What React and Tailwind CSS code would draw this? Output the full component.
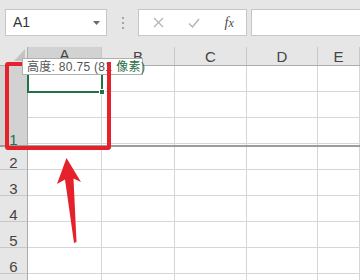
import React from "react";

const cols = [
  { key: "A", w: "w-[74px]", sel: true },
  { key: "B", w: "w-[73px]" },
  { key: "C", w: "w-[72px]" },
  { key: "D", w: "w-[71px]" },
  { key: "E", w: "flex-1" },
];

const rowHeads = [
  { n: 1, h: "h-[81px]", sel: true },
  { n: 2, h: "h-[23px]" },
  { n: 3, h: "h-[26px]" },
  { n: 4, h: "h-[26px]" },
  { n: 5, h: "h-[26px]" },
  { n: 6, h: "h-[26px]" },
  { n: "", h: "h-[26px]" },
];

function Toolbar() {
  return (
    <div className="flex h-[47px] items-start bg-[#e6e6e6] pl-[5px] pt-[9px]">
      <div className="flex h-[27px] w-[102px] items-center justify-between border border-[#c6c6c6] bg-white pl-[7px] pr-[6px]">
        <span className="text-[14px] text-[#333]">A1</span>
        <svg width="7" height="4" viewBox="0 0 7 4">
          <path d="M0 0 L7 0 L3.5 4 Z" fill="#6a6a6a" />
        </svg>
      </div>
      <div className="flex w-[31px] flex-col items-center gap-[3px] pt-[8px]">
        <span className="h-[2px] w-[2px] bg-[#a5a5a5]" />
        <span className="h-[2px] w-[2px] bg-[#a5a5a5]" />
        <span className="h-[2px] w-[2px] bg-[#a5a5a5]" />
      </div>
      <div className="flex h-[27px] w-[109px] items-center border border-[#c6c6c6] bg-white">
        <div className="flex w-[38px] justify-center pl-[2px]">
          <svg width="11" height="11" viewBox="0 0 11 11">
            <path d="M1 1 L10 10 M10 1 L1 10" stroke="#b4b4b4" strokeWidth="1.3" />
          </svg>
        </div>
        <div className="flex w-[36px] justify-center">
          <svg width="12" height="10" viewBox="0 0 12 10">
            <path d="M1 5.5 L4.5 9 L11 1" stroke="#b4b4b4" strokeWidth="1.4" fill="none" />
          </svg>
        </div>
        <div className="flex w-[34px] justify-center">
          <span className="font-['Liberation_Serif',serif] text-[14px] italic text-[#4a4a4a]">
            f<span className="text-[12px]">x</span>
          </span>
        </div>
      </div>
      <div className="ml-[4px] h-[27px] flex-1 border-y border-l border-[#c6c6c6] bg-white" />
    </div>
  );
}

function ColumnHeader() {
  return (
    <div className="flex h-[19px] border-b border-[#ababab] bg-[#e6e6e6]">
      <div className="relative w-[28px] border-r border-[#ababab]">
        <svg className="absolute bottom-[4px] right-[2px]" width="11" height="12" viewBox="0 0 11 12">
          <path d="M11 0 L11 12 L0 12 Z" fill="#c4c4c4" />
        </svg>
      </div>
      {cols.map((c) => (
        <div
          key={c.key}
          className={`${c.w} flex items-end justify-center border-r border-[#c8c8c8] pb-[1px] text-[15px] leading-none text-[#444] ${
            c.sel ? "border-b-2 border-b-[#217346] bg-[#d2d2d2]" : ""
          }`}
        >
          {c.key}
        </div>
      ))}
    </div>
  );
}

function Body() {
  return (
    <div className="flex">
      <div className="w-[28px] border-r border-[#ababab] bg-[#e6e6e6]">
        {rowHeads.map((r, i) => (
          <div
            key={i}
            className={`${r.h} flex items-end justify-center border-b border-[#c8c8c8] text-[15px] leading-none ${
              r.sel ? "bg-[#d2d2d2] text-[#217346]" : "text-[#444]"
            }`}
          >
            {r.n !== "" && <span className="translate-y-[1px]">{r.n}</span>}
          </div>
        ))}
      </div>
      <div className="flex-1">
        {Array.from({ length: 9 }).map((_, i) => (
          <div key={i} className="flex h-[26px] border-b border-[#d6d6d6]">
            {cols.map((c) => (
              <div key={c.key} className={`${c.w} border-r border-[#d6d6d6]`} />
            ))}
          </div>
        ))}
      </div>
    </div>
  );
}

export default function App() {
  return (
    <div className="relative h-[280px] w-[360px] overflow-hidden bg-white font-['Liberation_Sans','Noto_Sans_CJK_SC',sans-serif]">
      <Toolbar />
      <ColumnHeader />
      <Body />

      {/* drag preview line */}
      <div className="absolute left-0 top-[145px] h-[2px] w-full bg-[#9c9c9c]" />

      {/* selection */}
      <div className="absolute left-[27px] top-[64px] h-[29px] w-[76px] border-2 border-[#217346]" />
      <div className="absolute left-[99px] top-[89px] h-[6px] w-[6px] border border-white bg-[#217346]" />

      {/* red frame */}
      <div className="absolute left-[5px] top-[62px] h-[88px] w-[106px] rounded-[3px] border-4 border-[#e5212b]" />

      {/* tooltip */}
      <div className="absolute left-[22px] top-[58px] flex h-[17px] w-[121px] items-center whitespace-nowrap border border-[#b0b0b0] bg-white pl-[4px] text-[12px] leading-none tracking-[0.3px] text-[#555]">
        高度: 80.75 (81 <span className="ml-[4px] text-[#2a6e45]">像素)</span>
      </div>
      <div className="absolute left-[107px] top-[62px] h-[14px] w-[4px] bg-[#e5212b]" />

      {/* arrow */}
      <svg className="absolute left-0 top-0" width="360" height="280" viewBox="0 0 360 280">
        <path
          d="M66.5 158 L81 182 L73.5 178.5 L76.5 242 L74 243 L65 179.5 L57 184 Z"
          fill="#e5212b"
          strokeLinejoin="round"
        />
      </svg>
    </div>
  );
}
